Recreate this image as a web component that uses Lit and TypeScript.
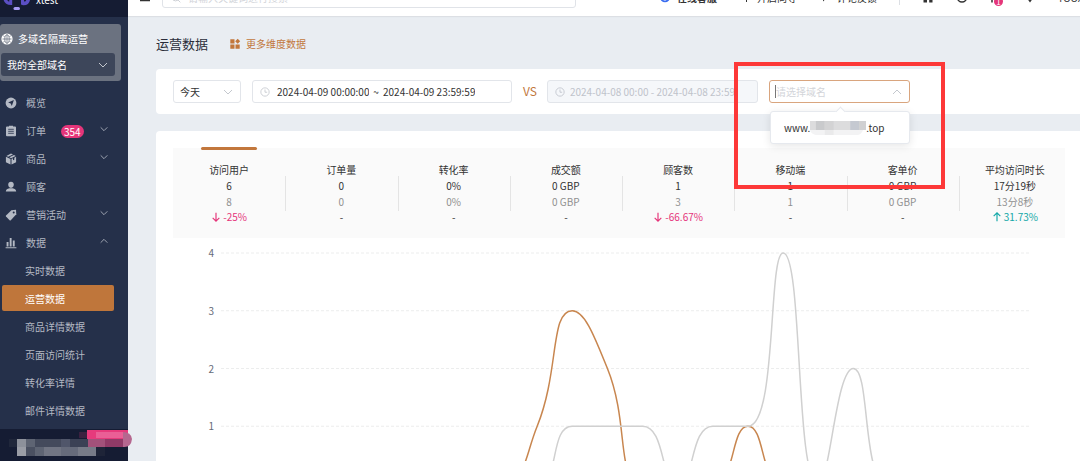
import { LitElement, html, css, svg } from "lit";
import { customElement, property, state } from "lit/decorators.js";

type Trend = "up" | "down" | "none";
interface Metric { name: string; now: string; before: string; change: string; trend: Trend; }
interface NavItem { icon: string; label: string; badge?: string; arrow?: "down" | "up"; }

const METRICS: Metric[] = [
  { name: "访问用户", now: "6", before: "8", change: "-25%", trend: "down" },
  { name: "订单量", now: "0", before: "0", change: "-", trend: "none" },
  { name: "转化率", now: "0%", before: "0%", change: "-", trend: "none" },
  { name: "成交额", now: "0 GBP", before: "0 GBP", change: "-", trend: "none" },
  { name: "顾客数", now: "1", before: "3", change: "-66.67%", trend: "down" },
  { name: "移动端", now: "1", before: "1", change: "-", trend: "none" },
  { name: "客单价", now: "0 GBP", before: "0 GBP", change: "-", trend: "none" },
  { name: "平均访问时长", now: "17分19秒", before: "13分8秒", change: "31.73%", trend: "up" },
];

const NAV: NavItem[] = [
  { icon: "compass", label: "概览" },
  { icon: "order", label: "订单", badge: "354", arrow: "down" },
  { icon: "box", label: "商品", arrow: "down" },
  { icon: "user", label: "顾客" },
  { icon: "tag", label: "营销活动", arrow: "down" },
  { icon: "bars", label: "数据", arrow: "up" },
];

const SUBNAV = ["实时数据", "运营数据", "商品详情数据", "页面访问统计", "转化率详情", "邮件详情数据"];

// Visitors per hour, 00:00 to 23:00
const TODAY = [0, 0, 0, 0, 0, 0, 0, 0, 0, 1, 3, 2, 0, 0, 0, 1, 0, 0, 0, 0, 0, 0, 0, 0];
const YESTERDAY = [0, 0, 0, 0, 0, 0, 0, 0, 0, 0, 1, 1, 1, 0, 1, 1, 4, 0, 2, 0, 0, 0, 0, 0];

const ICONS: Record<string, unknown> = {
  globe: svg`<circle cx="6" cy="6" r="5.6" fill="currentColor"/><g fill="none" stroke="#6b7280" stroke-width="0.8"><ellipse cx="6" cy="6" rx="2.2" ry="4.2"/><path d="M1.5 6h9M6 1.5v9M2.300 2.800l1.400 1M9.700 2.800l-1.400 1M2.300 9.200l1.400-1M9.700 9.200l-1.400-1"/></g>`,
  compass: svg`<circle cx="6" cy="6" r="5.4" fill="currentColor"/><path d="M8.9 3.1 6.8 8.9 5.7 6.4 3.1 5.4z" fill="#25304a"/>`,
  order: svg`<path d="M2 1.6h2V.7h4v.9h2q1 0 1 1v7.7q0 1-1 1H2q-1 0-1-1V2.600q0-1 1-1z" fill="currentColor"/><path d="M3.200 4.300h5.600M3.200 6.300h5.600M3.200 8.300h5.600" stroke="#25304a" stroke-width=".8"/>`,
  box: svg`<path d="M6 .6 8 1.500 3.200 3.800 1.400 2.900zM9 2l1.700.9L6 5.200 4.300 4.300zM.9 3.800l4.600 2.200v5.400L.9 9.200zM11.100 3.800v5.400L6.500 11.400V6l1.500-.7v2l1.300-.6v-2z" fill="currentColor"/>`,
  user: svg`<path d="M6 .8c1.700 0 2.800 1.200 2.800 2.800C8.800 5.400 7.700 7 6 7S3.200 5.400 3.200 3.600C3.200 2 4.300.8 6 .8zM4.300 7.200h3.400c2 .5 3.300 1.300 3.500 3.400H.8c.2-2.100 1.500-2.900 3.500-3.400z" fill="currentColor"/>`,
  tag: svg`<path d="M6.400 1.200 11 .8l.3 4.500-5.500 5.900q-.6.500-1.200 0L1 7.600q-.5-.6 0-1.200z" fill="currentColor"/><circle cx="8.700" cy="3.400" r="1" fill="#25304a"/>`,
  bars: svg`<path d="M1.600 5h1.900v4.600H1.600zM4.700 1h1.900v8.600H4.700zM7.800 3.600h1.900v6H7.800zM.6 10.300h10.800v1H.6z" fill="currentColor"/>`,
  down: svg`<path d="M2 4l4 4 4-4" fill="none" stroke="currentColor"/>`,
  up: svg`<path d="M2 8l4-4 4 4" fill="none" stroke="currentColor"/>`,
  clock: svg`<g fill="none" stroke="currentColor"><circle cx="6" cy="6" r="5"/><path d="M6 3v3.300h2.600"/></g>`,
  grid: svg`<path d="M1.300 1.300h4.200v4.200H1.300zM1.300 6.500h4.200v4.200H1.300zM6.500 6.500h4.200v4.200H6.500zM8.700.8l2.500 2.500-2.500 2.500-2.500-2.500z" fill="currentColor"/>`,
  fall: svg`<path d="M6 1v10M2 7l4 4 4-4" fill="none" stroke="currentColor" stroke-width="1.400"/>`,
  rise: svg`<path d="M6 11V1M2 5l4-4 4 4" fill="none" stroke="currentColor" stroke-width="1.400"/>`,
  menu: svg`<path d="M1 1h10M1 5h10M1 8.500h10" stroke="currentColor" stroke-width="1.500"/>`,
  search: svg`<g fill="none" stroke="currentColor"><circle cx="5.500" cy="5.500" r="4"/><path d="M8.500 8.500l2.700 2.700"/></g>`,
  service: svg`<circle cx="6" cy="5" r="5.200" fill="#3a6df0"/><path d="M4 7q2 2 4.500-.5" stroke="#fff" fill="none" stroke-width="1.200"/>`,
  flag: svg`<path d="M7.500 0v10M7.500 1H13l-1 3 1 3H7.500" fill="none" stroke="currentColor"/>`,
  note: svg`<path d="M3 0h9v7H6.500L4 9.500V7H3z" fill="currentColor"/>`,
  store: svg`<path d="M1.500 0h9v10.500H7.200V7.500H5v3H1.500z" fill="currentColor"/>`,
  ring: svg`<circle cx="6" cy="5.500" r="4.500" fill="none" stroke="currentColor" stroke-width="1.500"/>`,
  bell: svg`<path d="M2 0v10.500M2 1h6" fill="none" stroke="currentColor" stroke-width="1.500"/>`,
  pin: svg`<path d="M6 10.500 3.500 7V1h5v6z" fill="currentColor"/>`,
};

@customElement("ui-icon")
class UiIcon extends LitElement {
  static styles = css`
    :host { display: inline-flex; width: 12px; height: 12px; flex: none; }
    svg { width: 100%; height: 100%; display: block; overflow: visible; }
  `;
  @property() name = "";
  render() {
    return html`<svg viewBox="0 0 12 12" aria-hidden="true">${ICONS[this.name]}</svg>`;
  }
}

const STEP_X = 35;
const STEP_Y = 58;
const CHART_W = STEP_X * 23;
const CHART_H = STEP_Y * 4;

/** Smooth line through the points; the handles never pass the neighbouring values. */
function smoothPath(values: number[]): string {
  const pts = values.map((v, i) => [i * STEP_X, CHART_H - v * STEP_Y]);
  const clamp = (v: number, a: number, b: number) => Math.max(Math.min(a, b), Math.min(Math.max(a, b), v));
  let d = `M${pts[0][0]} ${pts[0][1]}`;
  let out = pts[0];
  for (let i = 1; i < pts.length; i++) {
    const p = pts[i];
    const prev = pts[i - 1];
    const next = pts[i + 1];
    let into = p;
    let nextOut = p;
    if (next) {
      const lenPrev = Math.hypot(p[0] - prev[0], p[1] - prev[1]);
      const lenNext = Math.hypot(next[0] - p[0], next[1] - p[1]);
      const ratio = lenNext / (lenNext + lenPrev);
      nextOut = [0, 1].map((k) => clamp(p[k] + (next[k] - prev[k]) * 0.5 * ratio, p[k], next[k]));
      into = [0, 1].map((k) => clamp(p[k] - ((nextOut[k] - p[k]) * lenPrev) / lenNext, p[k], prev[k]));
      nextOut = [0, 1].map((k) => p[k] + ((p[k] - into[k]) * lenNext) / lenPrev);
    }
    d += `C${out.join(" ")} ${into.join(" ")} ${p.join(" ")}`;
    out = nextOut;
  }
  return d;
}

@customElement("visit-chart")
class VisitChart extends LitElement {
  static styles = css`
    :host { display: flex; gap: 7px; padding: 15px 51px 0 52px; }
    .axis { display: flex; flex-direction: column; justify-content: space-between; width: 6px; margin: -7px 0; text-align: right; line-height: 14px; color: #666b78; }
    svg { flex: 1; min-width: 0; height: 231px; display: block; overflow: visible; }
    svg * { vector-effect: non-scaling-stroke; fill: none; }
    .grid { stroke: #eceded; stroke-dasharray: 3 2; }
    .today { stroke: #c8864f; stroke-width: 1.5; }
    .before { stroke: #d0d0d0; stroke-width: 1.5; }
  `;
  render() {
    return html`
      <div class="axis">${[4, 3, 2, 1, 0].map((n) => html`<span>${n}</span>`)}</div>
      <svg viewBox="0 0 ${CHART_W} ${CHART_H}" preserveAspectRatio="none" role="img" aria-label="访问用户">
        ${[0, 1, 2, 3, 4].map((n) => svg`<path class="grid" d="M0 ${n * STEP_Y}H${CHART_W}"/>`)}
        <path class="today" d=${smoothPath(TODAY)} />
        <path class="before" d=${smoothPath(YESTERDAY)} />
      </svg>
    `;
  }
}

@customElement("side-bar")
class SideBar extends LitElement {
  static styles = css`
    :host { display: flex; flex-direction: column; width: 128px; flex: none; background: #25304a; color: #b4b9c4; position: relative; z-index: 1; }
    .logo { display: flex; align-items: flex-end; gap: 6px; height: 17px; padding-left: 3px; background: #151c33; color: #fff; overflow: hidden; flex: none; box-sizing: border-box; }
    .logo svg { width: 27px; height: 17px; flex: none; }
    .logo span { line-height: 14px; margin-bottom: 10px; }
    .scope { margin: 7px 7px 8px 0; padding: 9px 6px 5px 1px; background: #6b7280; border-radius: 3px; color: #fff; }
    .scope label { display: flex; align-items: center; gap: 5px; line-height: 12px; margin-bottom: 8px; }
    .pick { display: grid; align-items: center; }
    .pick > * { grid-area: 1 / 1; }
    .pick ui-icon { justify-self: end; margin-right: 6px; color: #c3c7ce; pointer-events: none; }
    select { appearance: none; font: inherit; color: #fff; background: #3d465a; border: 0; border-radius: 3px; height: 23px; padding: 0 6px; width: 100%; }
    nav { flex: 1; min-height: 0; overflow: hidden; }
    a { display: flex; align-items: center; height: 28px; color: inherit; text-decoration: none; padding: 0 19px 0 5px; }
    a .name { margin-left: 9px; }
    a .badge { margin-left: 15px; background: #e5357a; color: #fff; border-radius: 7px; line-height: 13px; padding: 0 3px; }
    a .arrow { margin-left: auto; width: 10px; height: 10px; margin-bottom: 5px; }
    .sub a { box-sizing: border-box; height: 26px; margin: 0 14px 2px 2px; padding: 2px 0 0 23px; border-radius: 2px; }
    .sub a.on { background: #bf763b; color: #fff; }
    .account { flex: none; height: 32px; background: #151c33; }
    .account svg { display: block; width: 134px; height: 32px; overflow: visible; }
  `;
  @state() private current = "运营数据";
  render() {
    return html`
      <div class="logo">
        <svg viewBox="0 0 27 17" aria-hidden="true">
          <path d="M.6 0h3.700q.7 1.600 2 1.500V0h2.900v5Q2.300 5.600.6 0zM18 0h3v1.500Q23 1.600 23.200 0H27Q26 5.500 20 5.200L18 4.500z" fill="#5b4fc4"/>
          <rect x="10.500" y="7" width="6.500" height="3" rx="1.500" fill="#a79cf5" />
        </svg>
        <span>xtest</span>
      </div>
      <div class="scope">
        <label for="scope"><ui-icon name="globe"></ui-icon>多域名隔离运营</label>
        <div class="pick">
          <select id="scope"><option>我的全部域名</option></select>
          <ui-icon name="down"></ui-icon>
        </div>
      </div>
      <nav>
        ${NAV.map((n) => html`<a href="#"><ui-icon name=${n.icon}></ui-icon><span class="name">${n.label}</span>
          ${n.badge ? html`<span class="badge">${n.badge}</span>` : ""}
          ${n.arrow ? html`<ui-icon class="arrow" name=${n.arrow}></ui-icon>` : ""}</a>`)}
        <div class="sub">
          ${SUBNAV.map((s) => html`<a href="#" class=${s === this.current ? "on" : ""}
            @click=${(e: Event) => { e.preventDefault(); this.current = s; }}>${s}</a>`)}
        </div>
      </nav>
      <div class="account">
        <svg viewBox="0 0 134 32" aria-hidden="true">
          <path d="M87 1h41v9H87z" fill="#e63a7c"/><path d="M96 3h27v6H96z" fill="#ea5f96"/>
          <path d="M79 3h8v6h-8z" fill="#3a2140"/>
          <path d="M9 10h8v8H9z" fill="#20273b"/><path d="M17 10h9v8h-9z" fill="#8d919b"/><path d="M17 18h9v9h-9z" fill="#9a9da6"/>
          <path d="M26 10h9v8h-9z" fill="#5e6473"/><path d="M26 18h9v9h-9z" fill="#4a5061"/>
          <path d="M35 10h26v8H35z" fill="#444a5c"/><path d="M35 18h9v9h-9z" fill="#5e6473"/><path d="M44 18h17v9H44z" fill="#717583"/>
          <path d="M61 10h9v8h-9z" fill="#50566a"/><path d="M70 10h18v8H70z" fill="#3b4155"/><path d="M61 18h17v9H61z" fill="#666b7b"/><path d="M78 18h18v9H78z" fill="#777b88"/><path d="M96 18h9v9h-9z" fill="#1e2438"/>
          <path d="M88 10h17v8H88z" fill="#a2517a"/><path d="M105 10h18v8h-18z" fill="#903a67"/>
          <path d="M123 3q8 0 9 7-1 9-9 8z" fill="#b5678f"/>
        </svg>
      </div>
    `;
  }
}

@customElement("app-root")
class AppRoot extends LitElement {
  static styles = css`
    :host { display: flex; height: 100vh; overflow: hidden; background: #e9edf2; color: #333; font: 10px/16px "Noto Sans CJK SC", sans-serif; }
    main { flex: 1; min-width: 0; position: relative; overflow: hidden; }
    header { display: flex; align-items: center; height: 40px; margin-top: -24px; background: #fff; box-shadow: 0 1px 1px #dcdfe4; padding: 4px 0 0 11px; box-sizing: border-box; }
    header .menu { margin-right: 11px; }
    .search { display: flex; flex: none; align-items: center; gap: 7px; width: 414px; height: 20px; border: 1px solid #e0e3e8; border-radius: 3px; padding: 0 8px; box-sizing: border-box; color: #c4c8ce; }
    .search ui-icon { width: 10px; height: 10px; }
    .search input { flex: 1; }
    input { font: inherit; border: 0; padding: 0; background: none; outline: none; color: inherit; min-width: 0; }
    input::placeholder { color: #d3d5da; opacity: 1; }
    .tools { display: flex; align-items: center; flex: 1; gap: 22px; margin-left: 83px; white-space: nowrap; }
    button { display: inline-flex; align-items: center; gap: 6px; font: inherit; color: inherit; border: 0; padding: 0; background: none; }
    .tools .lead { font-weight: 700; }
    .tools .rule { width: 1px; height: 14px; background: #dcdfe4; }
    .tools .alert { position: relative; }
    .alert .dot { position: absolute; left: 4px; top: 5px; width: 9px; height: 9px; border-radius: 50%; background: #e5357a; color: #fff; font-size: 8px; line-height: 9px; }
    .head { display: flex; align-items: center; padding: 18px 0 16px 28px; gap: 21px; }
    h1 { font-size: 13px; line-height: 19px; font-weight: 400; margin: 0; color: #2a2d3a; }
    .more { display: flex; align-items: center; gap: 5px; color: #c2773c; text-decoration: none; }
    .card { margin-left: 28px; background: #fff; border-radius: 4px 0 0 4px; }
    .filters { display: flex; align-items: center; padding: 11px 0 11px 17px; margin-bottom: 17px; }
    .field { display: flex; align-items: center; height: 23px; box-sizing: border-box; border: 1px solid #e2e5ea; border-radius: 3px; }
    .day { display: grid; width: 68px; margin-right: 11px; }
    .day > * { grid-area: 1 / 1; }
    .day ui-icon { justify-self: end; margin-right: 6px; color: #c4c8ce; pointer-events: none; }
    .day select { appearance: none; font: inherit; color: inherit; border: 0; background: none; padding: 0 6px; width: 100%; height: 21px; }
    .range { width: 260px; padding: 0 7px; gap: 7px; margin-right: 11px; }
    .range ui-icon { color: #c4c8ce; width: 10px; height: 10px; }
    .range input { width: 92px; }
    .range .to { margin: 0 -4px; width: 8px; text-align: center; }
    .vs { color: #c2773c; font-size: 12px; line-height: 14px; margin: 0 10px 2px 0; }
    .off { width: 211px; background: #f5f7fa; color: #bfc3cb; padding: 0 7px; gap: 5px; margin-right: 11px; }
    .off ui-icon { width: 10px; height: 10px; }
    .off input { flex: 1; }
    .domain { position: relative; width: 141px; border-color: #d9a57e; padding: 0 6px 0 5px; }
    .domain .caret { width: 1px; height: 13px; background: #777; }
    .domain input { flex: 1; }
    .domain ui-icon { color: #c4c8ce; }
    .menu-pop { position: absolute; z-index: 2; left: 0; right: -1px; top: 30px; height: 33px; display: flex; align-items: center; padding-left: 13px; background: #fff; border: 1px solid #e6e9ee; border-radius: 3px; box-shadow: 0 2px 8px #0000001a; box-sizing: border-box; }
    .menu-pop::before { content: ""; position: absolute; left: 66px; top: -4px; width: 6px; height: 6px; background: #fff; border: solid #e6e9ee; border-width: 1px 0 0 1px; transform: rotate(45deg); }
    .menu-pop svg { width: 56px; height: 14px; flex: none; }
    .panel { margin: 0 15px 0 17px; background: #fafafa; height: 90px; }
    .report { padding-top: 17px; }
    .metrics { display: grid; grid-template-columns: repeat(8, 1fr); margin-right: -6px; text-align: center; }
    .metric { display: flex; flex-direction: column; position: relative; padding: 14px 0 12px; align-items: center; }
    .metric + .metric::before { content: ""; position: absolute; left: 0; top: 28px; height: 35px; width: 1px; background: #e4e4e4; }
    .metric.on::after { content: ""; position: absolute; top: -1px; width: 56px; height: 3px; border-radius: 2px; background: #c2773c; }
    .before { color: #909090; }
    .change { display: flex; align-items: center; gap: 2px; line-height: 14px; }
    .change ui-icon { width: 10px; height: 10px; }
    .down { color: #e5357a; }
    .up { color: #13a8a8; }
    .mark { position: absolute; left: 606px; top: 62px; width: 211px; height: 127px; box-sizing: border-box; border: 4px solid #fd3838; pointer-events: none; z-index: 3; }
  `;
  render() {
    return html`
      <side-bar></side-bar>
      <main>
        <header>
          <button class="menu" aria-label="菜单"><ui-icon name="menu"></ui-icon></button>
          <div class="search"><ui-icon name="search"></ui-icon><input type="search" aria-label="搜索" placeholder="请输入关键词进行搜索" /></div>
          <div class="tools">
            <button class="lead"><ui-icon name="service"></ui-icon>在线客服</button>
            <button><ui-icon name="flag"></ui-icon>开启向导</button>
            <button><ui-icon name="note"></ui-icon>评论反馈</button>
            <span class="rule"></span>
            <button aria-label="店铺"><ui-icon name="store"></ui-icon></button>
            <button aria-label="刷新"><ui-icon name="ring"></ui-icon></button>
            <button class="alert" aria-label="通知"><ui-icon name="bell"></ui-icon><span class="dot">1</span></button>
            <button aria-label="位置"><ui-icon name="pin"></ui-icon></button>
            <button>YOOX</button>
          </div>
        </header>
        <div class="head">
          <h1>运营数据</h1>
          <a class="more" href="#"><ui-icon name="grid"></ui-icon>更多维度数据</a>
        </div>
        <section class="card filters">
          <div class="field day"><select aria-label="日期"><option>今天</option></select><ui-icon name="down"></ui-icon></div>
          <div class="field range">
            <ui-icon name="clock"></ui-icon>
            <input aria-label="开始时间" .value=${"2024-04-09 00:00:00"} /><span class="to">~</span>
            <input aria-label="结束时间" .value=${"2024-04-09 23:59:59"} />
          </div>
          <span class="vs">VS</span>
          <div class="field off"><ui-icon name="clock"></ui-icon><input aria-label="对比时间" disabled .value=${"2024-04-08 00:00 - 2024-04-08 23:59"} /></div>
          <div class="field domain">
            <span class="caret"></span><input aria-label="域名" placeholder="请选择域名" /><ui-icon name="up"></ui-icon>
            <div class="menu-pop">www.<svg viewBox="0 0 57 14" preserveAspectRatio="none" aria-hidden="true">
              <path d="M0 0h57v9H0z" fill="#dcdcdd"/><path d="M6 0h9v9H6z" fill="#c9cacc"/><path d="M15 0h9v9h-9z" fill="#d3d3d4"/><path d="M41 0h9v9h-9z" fill="#c5c9d1"/><path d="M50 0h7v9h-7z" fill="#d0d0d2"/>
              <path d="M0 9h54q-2 5-6 5H6Q1 13 0 9z" fill="#f3f3f4"/><path d="M15 9h9v5h-9z" fill="#eaeaeb"/>
            </svg>.top</div>
          </div>
        </section>
        <section class="card report">
          <div class="panel">
            <div class="metrics">
              ${METRICS.map((m, i) => html`<div class="metric ${i === 0 ? "on" : ""}">
                <span>${m.name}</span><span>${m.now}</span><span class="before">${m.before}</span>
                <span class="change ${m.trend}">${m.trend === "none" ? "" : html`<ui-icon name=${m.trend === "up" ? "rise" : "fall"}></ui-icon>`}${m.change}</span>
              </div>`)}
            </div>
          </div>
          <visit-chart></visit-chart>
        </section>
        <div class="mark"></div>
      </main>
    `;
  }
}
